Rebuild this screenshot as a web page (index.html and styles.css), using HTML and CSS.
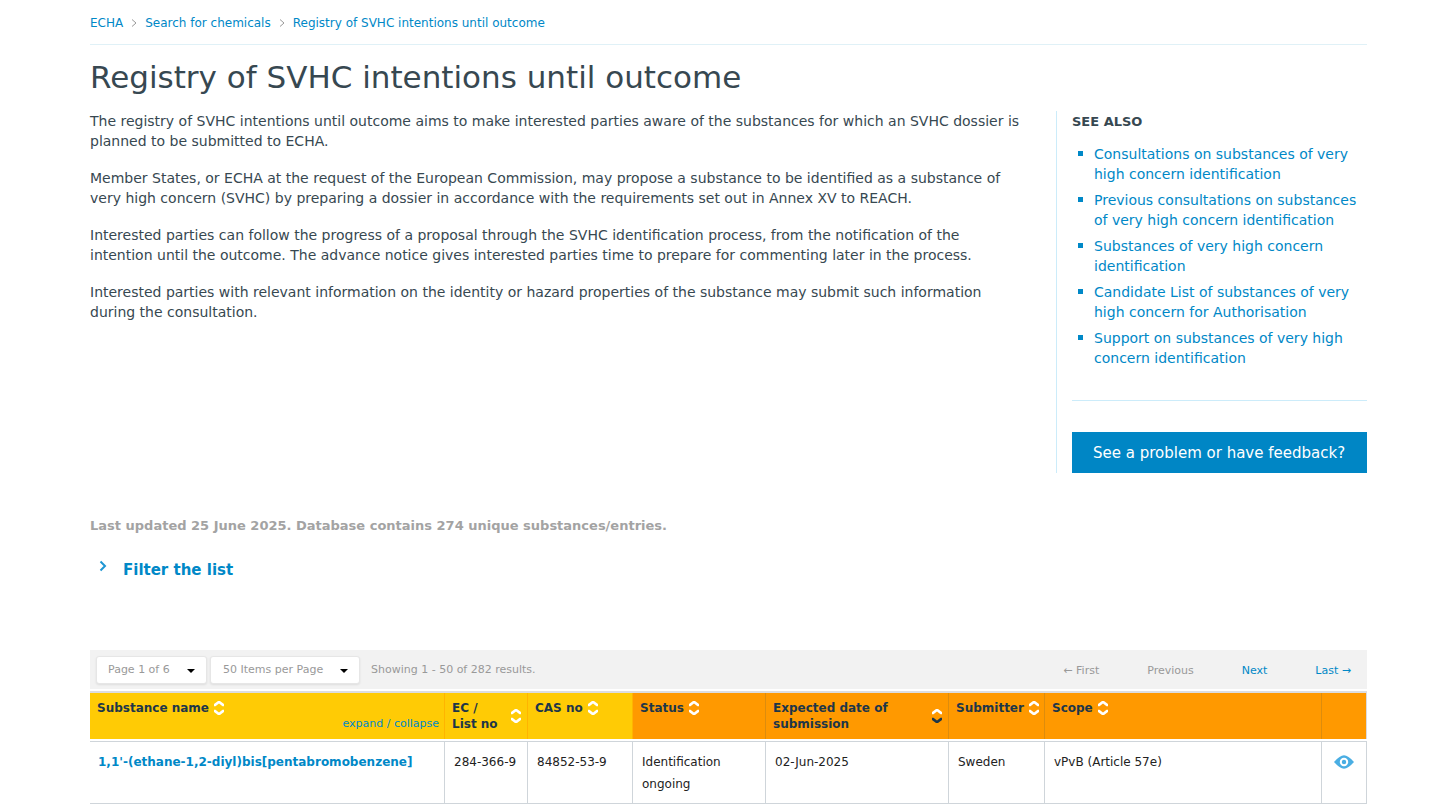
FILE: index.html
```html
<!DOCTYPE html>
<html lang="en">
<head>
<meta charset="utf-8">
<title>Registry of SVHC intentions until outcome</title>
<link rel="stylesheet" href="styles.css">
</head>
<body>
<svg class="defs" aria-hidden="true">
  <symbol id="sort" viewBox="0 0 12 16">
    <path d="M1 4 5 1h2l4 3v2.200H9.500L6 3.500 2.500 6.200H1Z" />
    <path class="down" d="M1 12 5 15h2l4-3V9.800H9.500L6 12.500 2.500 9.800H1Z" />
  </symbol>
</svg>
<div class="page">
  <nav class="breadcrumb" aria-label="Breadcrumb">
    <a href="#">ECHA</a>
    <svg class="sep" viewBox="0 0 6 8"><path d="M1 .5 5 4 1 7.500"/></svg>
    <a href="#">Search for chemicals</a>
    <svg class="sep" viewBox="0 0 6 8"><path d="M1 .5 5 4 1 7.500"/></svg>
    <a href="#">Registry of SVHC intentions until outcome</a>
  </nav>
  <h1>Registry of SVHC intentions until outcome</h1>
  <div class="columns">
    <main class="intro">
      <p>The registry of SVHC intentions until outcome aims to make interested parties aware of the substances for which an SVHC dossier is planned to be submitted to ECHA.</p>
      <p>Member States, or ECHA at the request of the European Commission, may propose a substance to be identified as a substance of very high concern (SVHC) by preparing a dossier in accordance with the requirements set out in Annex XV to REACH.</p>
      <p>Interested parties can follow the progress of a proposal through the SVHC identification process, from the notification of the intention until the outcome. The advance notice gives interested parties time to prepare for commenting later in the process.</p>
      <p>Interested parties with relevant information on the identity or hazard properties of the substance may submit such information during the consultation.</p>
    </main>
    <aside class="side">
      <h2>SEE ALSO</h2>
      <ul>
        <li><a href="#">Consultations on substances of very high concern identification</a></li>
        <li><a href="#">Previous consultations on substances of very high concern identification</a></li>
        <li><a href="#">Substances of very high concern identification</a></li>
        <li><a href="#">Candidate List of substances of very high concern for Authorisation</a></li>
        <li><a href="#">Support on substances of very high concern identification</a></li>
      </ul>
      <a class="feedback" href="#">See a problem or have feedback?</a>
    </aside>
  </div>
  <p class="updated">Last updated 25 June 2025. Database contains 274 unique substances/entries.</p>
  <button class="filter" type="button">
    <svg viewBox="0 0 8 12"><path d="M1.500 1.500 6 6l-4.500 4.500"/></svg>
    <span>Filter the list</span>
  </button>
  <div class="pager">
    <select class="page-no" aria-label="Page"><option>Page 1 of 6</option></select>
    <select class="page-size" aria-label="Items per page"><option>50 Items per Page</option></select>
    <span class="results">Showing 1 - 50 of 282 results.</span>
    <div class="links">
      <span>← First</span>
      <span>Previous</span>
      <a href="#">Next</a>
      <a href="#">Last →</a>
    </div>
  </div>
  <table>
    <colgroup><col class="c-name"><col class="c-ec"><col class="c-cas"><col class="c-status"><col class="c-date"><col class="c-sub"><col class="c-scope"><col class="c-view"></colgroup>
    <thead>
      <tr>
        <th class="key" scope="col"><div class="head"><span>Substance name</span><svg class="sort"><use href="#sort"/></svg></div><a class="expand" href="#">expand / collapse</a></th>
        <th class="key" scope="col"><div class="head wide"><span>EC /<br>List no</span><svg class="sort"><use href="#sort"/></svg></div></th>
        <th class="key" scope="col"><div class="head"><span>CAS no</span><svg class="sort"><use href="#sort"/></svg></div></th>
        <th scope="col"><div class="head"><span>Status</span><svg class="sort"><use href="#sort"/></svg></div></th>
        <th scope="col"><div class="head wide"><span>Expected date of<br>submission</span><svg class="sort active"><use href="#sort"/></svg></div></th>
        <th scope="col"><div class="head"><span>Submitter</span><svg class="sort"><use href="#sort"/></svg></div></th>
        <th scope="col"><div class="head"><span>Scope</span><svg class="sort"><use href="#sort"/></svg></div></th>
        <th scope="col" aria-label="Details"></th>
      </tr>
    </thead>
    <tbody>
      <tr>
        <td class="name"><a href="#">1,1'-(ethane-1,2-diyl)bis[pentabromobenzene]</a></td>
        <td>284-366-9</td>
        <td>84852-53-9</td>
        <td>Identification ongoing</td>
        <td>02-Jun-2025</td>
        <td>Sweden</td>
        <td>vPvB (Article 57e)</td>
        <td class="view"><a href="#" aria-label="View details"><svg viewBox="0 0 20 14"><path fill="#4aaee3" d="M0 7Q6 .3 10 .3T20 7q-6 6.700-10 6.700T0 7Z"/><circle cx="10" cy="7" r="3.200" fill="none" stroke="#fff" stroke-width="2"/><circle cx="10" cy="7" r="1.300" fill="#4aaee3"/></svg></a></td>
      </tr>
    </tbody>
  </table>
</div>
</body>
</html>
```
FILE: styles.css
```css
* { box-sizing: border-box; }
body {
  margin: 0;
  background: #fff;
  color: #374851;
  font: 14px/20px Verdana, "DejaVu Sans", sans-serif;
}
a { color: #0088c7; text-decoration: none; }
a:hover { text-decoration: underline; }
.defs { display: block; width: 0; height: 0; }
.page { padding: 0 69px 0 90px; }

.breadcrumb {
  display: flex;
  align-items: center;
  gap: 8px;
  height: 45px;
  padding-top: 2px;
  border-bottom: 1px solid #e0f1f7;
  font-size: 12px;
}
.sep { width: 6px; height: 8px; fill: none; stroke: #999; }

h1 { margin: 12px 0 14px; font-size: 31px; line-height: 40px; font-weight: 400; }

.columns { display: flex; }
.intro { flex: 1; padding-right: 34px; }
.intro p { margin: 0 0 17px; }
.side {
  width: 311px;
  padding-left: 15px;
  border-left: 1px solid #ccecfa;
}
.side h2 { margin: 0; font-size: 13px; line-height: 22px; }
.side ul {
  margin: 0;
  padding: 11px 0 32px;
  list-style: none;
  border-bottom: 1px solid #ccecfa;
}
.side li {
  display: flex;
  gap: 11px;
  margin-bottom: 6px;
  padding-left: 6px;
}
.side li:last-child { margin-bottom: 0; }
.side li::before {
  content: "";
  flex: none;
  width: 5px;
  height: 5px;
  margin-top: 7px;
  background: #0088c7;
}
.feedback {
  display: block;
  margin-top: 31px;
  padding: 11px 0 10px 21px;
  background: #0086c5;
  color: #fff;
  font-size: 15px;
  white-space: nowrap;
}

.updated {
  margin: 43px 0 0;
  color: #a3a3a3;
  font-size: 13px;
  font-weight: 700;
}
.filter {
  display: flex;
  gap: 16px;
  margin: 23px 0 0;
  padding: 0 0 0 9px;
  border: 0;
  background: none;
  color: #0088c7;
  font: 700 15px/22px Verdana, "DejaVu Sans", sans-serif;
}
.filter svg {
  width: 8px;
  height: 12px;
  margin-top: 1px;
  fill: none;
  stroke: #1e96d3;
  stroke-width: 2;
}

.pager {
  display: flex;
  align-items: center;
  height: 39px;
  margin-top: 69px;
  padding: 0 16px 0 6px;
  background: #f2f2f2;
  color: #999;
  font-size: 11px;
}
.pager select {
  appearance: none;
  height: 28px;
  margin-right: 3px;
  padding: 0 12px;
  border: 1px solid #e6e6e6;
  border-radius: 3px;
  box-shadow: 0 1px 2px #ddd;
  background: #fff url("data:image/svg+xml,%3Csvg xmlns='http://www.w3.org/2000/svg' width='8' height='4'%3E%3Cpath d='M0 0h8L4 4z'/%3E%3C/svg%3E") no-repeat right 11px top 12px;
  color: #999;
  font: inherit;
}
.pager .page-no { width: 111px; padding-left: 11px; }
.pager .page-size { width: 150px; }
.results { margin-left: 8px; }
.links { display: flex; gap: 48px; margin-left: auto; padding-top: 2px; }

table {
  width: 100%;
  margin-top: 2px;
  table-layout: fixed;
  border-collapse: separate;
  border-spacing: 0;
  border-top: 2px solid #dcdde0;
  font-size: 12px;
}
.c-name { width: 355px; }
.c-ec { width: 83px; }
.c-cas { width: 105px; }
.c-status { width: 133px; }
.c-date { width: 183px; }
.c-sub { width: 96px; }
.c-view { width: 45px; }
th {
  height: 46px;
  padding: 7px 5px 0 7px;
  vertical-align: top;
  background: #ff9900;
  border-right: 1px solid #dd8c0d;
  color: #1d3649;
  line-height: 16px;
  text-align: left;
}
th.key { background: #ffcb05; border-color: #ffb400; }
th:last-child { border-color: #dadbe0; }
.head { display: flex; gap: 4px; white-space: nowrap; }
.head.wide { align-items: center; justify-content: space-between; }
.sort {
  flex: none;
  width: 12px;
  height: 16px;
  fill: #fff;
}
.sort.active { --down: #1d3649; }
.down { fill: var(--down, #fff); }
.expand { display: block; font-size: 11px; font-weight: 400; text-align: right; }
td {
  padding: 9px 8px 8px 9px;
  vertical-align: top;
  border: 1px solid #cfd5da;
  border-width: 1px 1px 1px 0;
  color: #222;
  line-height: 22px;
}
td:first-child { padding-left: 8px; }
tbody::before { content: ""; display: table-row; height: 2px; }
.name a { font-weight: 700; }
td.view { padding-left: 12px; }
.view a { display: block; }
.view svg { display: block; width: 20px; height: 14px; margin-top: 4px; }
```
